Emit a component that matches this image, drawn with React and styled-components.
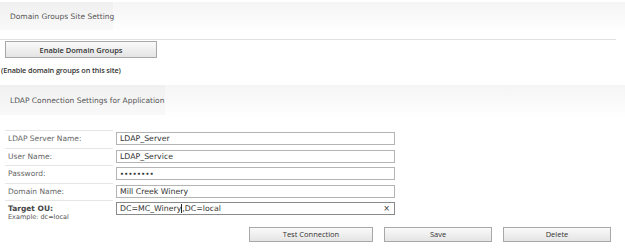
import React from 'react';
import styled, { createGlobalStyle } from 'styled-components';

const GlobalStyle = createGlobalStyle`
    html, body {
        margin: 0;
        padding: 0;
        background: #fff;
    }
    body {
        font-family: "DejaVu Sans", Verdana, sans-serif;
        font-size: 7.5px;
        color: #666;
    }
`;

const Page = styled.div`
    width: 625px;
    padding-top: 2px;
`;

const SectionHeader = styled.div`
    display: flex;
    height: ${props => props.height}px;
    background: linear-gradient(#f5f5f5, #fefefe);
`;

const SectionTitle = styled.div`
    display: flex;
    align-items: center;
    width: ${props => props.width}px;
    padding-left: 10px;
    box-sizing: border-box;
    background: linear-gradient(#f0f0f0, #f9f9f9);
    color: #555;
    font-size: 7.5px;
    white-space: nowrap;
`;

const Divider = styled.div`
    width: 616px;
    height: 1px;
    margin-top: 9px;
    background: #e2e2e2;
`;

const Button = styled.div`
    display: flex;
    align-items: center;
    justify-content: center;
    box-sizing: border-box;
    width: ${props => props.width}px;
    height: ${props => props.height || 15}px;
    border: 1px solid #a8a8a8;
    background: linear-gradient(#fafafa, #e4e4e4);
    color: #333;
    font-family: "Open Sans", "Noto Sans", sans-serif;
    font-size: 7.5px;
    font-weight: ${props => props.bold ? 600 : 400};
`;

const EnableBlock = styled.div`
    padding: 1px 0 0 5px;
`;

const HelpText = styled.div`
    margin: 7px 0 0 1px;
    line-height: 10px;
    color: #333;
    font-family: "Open Sans", "Noto Sans", sans-serif;
    font-weight: 600;
    font-size: 7.3px;
    letter-spacing: -0.12px;
`;

const Spacer = styled.div`
    height: ${props => props.h}px;
`;

const Form = styled.div`
    display: grid;
    grid-template-columns: 108px 279px;
    column-gap: 3px;
    padding-left: 5px;
`;

const Label = styled.div`
    height: 17.6px;
    box-sizing: border-box;
    border-top: 1px solid #e6e6e6;
    padding: 3px 0 0 3px;
    line-height: 9px;
    color: #666;
    white-space: nowrap;
`;

const StrongLabel = styled.div`
    font-weight: bold;
    color: #444;
    font-size: 7.5px;
`;

const Example = styled.div`
    font-size: 6.5px;
    color: #555;
`;

const FieldCell = styled.div`
    height: 17.6px;
    padding-top: 2px;
    box-sizing: border-box;
`;

const Field = styled.div`
    display: flex;
    align-items: center;
    box-sizing: border-box;
    height: 13px;
    border: 1px solid ${props => props.active ? '#8a8a8a' : '#b4b4b4'};
    padding: 0 4px 0 3px;
    color: #333;
    font-size: 7.8px;
    white-space: nowrap;
`;

const Dots = styled.span`
    font-weight: bold;
    letter-spacing: 0.4px;
    font-size: 6px;
`;

const Caret = styled.span`
    display: inline-block;
    width: 1px;
    height: 9px;
    background: #222;
`;

const Clear = styled.span`
    margin-left: auto;
    font-size: 8px;
    color: #333;
`;

const Actions = styled.div`
    display: flex;
    justify-content: flex-end;
    gap: 11px;
    width: 611px;
    margin-top: 9px;
`;

const fields = [
    { label: 'LDAP Server Name:', value: 'LDAP_Server' },
    { label: 'User Name:', value: 'LDAP_Service' },
    { label: 'Password:', value: '••••••••', password: true },
    { label: 'Domain Name:', value: 'Mill Creek Winery' },
];

const App = () => (
    <Page>
        <GlobalStyle />
        <SectionHeader height={28}>
            <SectionTitle width={113}>Domain Groups Site Setting</SectionTitle>
        </SectionHeader>
        <Divider />
        <EnableBlock>
            <Button width={152} height={17} bold>Enable Domain Groups</Button>
        </EnableBlock>
        <HelpText>(Enable domain groups on this site)</HelpText>
        <Spacer h={10} />
        <SectionHeader height={30}>
            <SectionTitle width={165}>LDAP Connection Settings for Application</SectionTitle>
        </SectionHeader>
        <Spacer h={15} />
        <Form>
            {fields.map(f => (
                <React.Fragment key={f.label}>
                    <Label>{f.label}</Label>
                    <FieldCell>
                        <Field>{f.password ? <Dots>{f.value}</Dots> : f.value}</Field>
                    </FieldCell>
                </React.Fragment>
            ))}
            <Label>
                <StrongLabel>Target OU:</StrongLabel>
                <Example>Example: dc=local</Example>
            </Label>
            <FieldCell>
                <Field active>
                    DC=MC_Winery<Caret />,DC=local
                    <Clear>×</Clear>
                </Field>
            </FieldCell>
        </Form>
        <Actions>
            <Button width={124}>Test Connection</Button>
            <Button width={108}>Save</Button>
            <Button width={108}>Delete</Button>
        </Actions>
    </Page>
);

export default App;
